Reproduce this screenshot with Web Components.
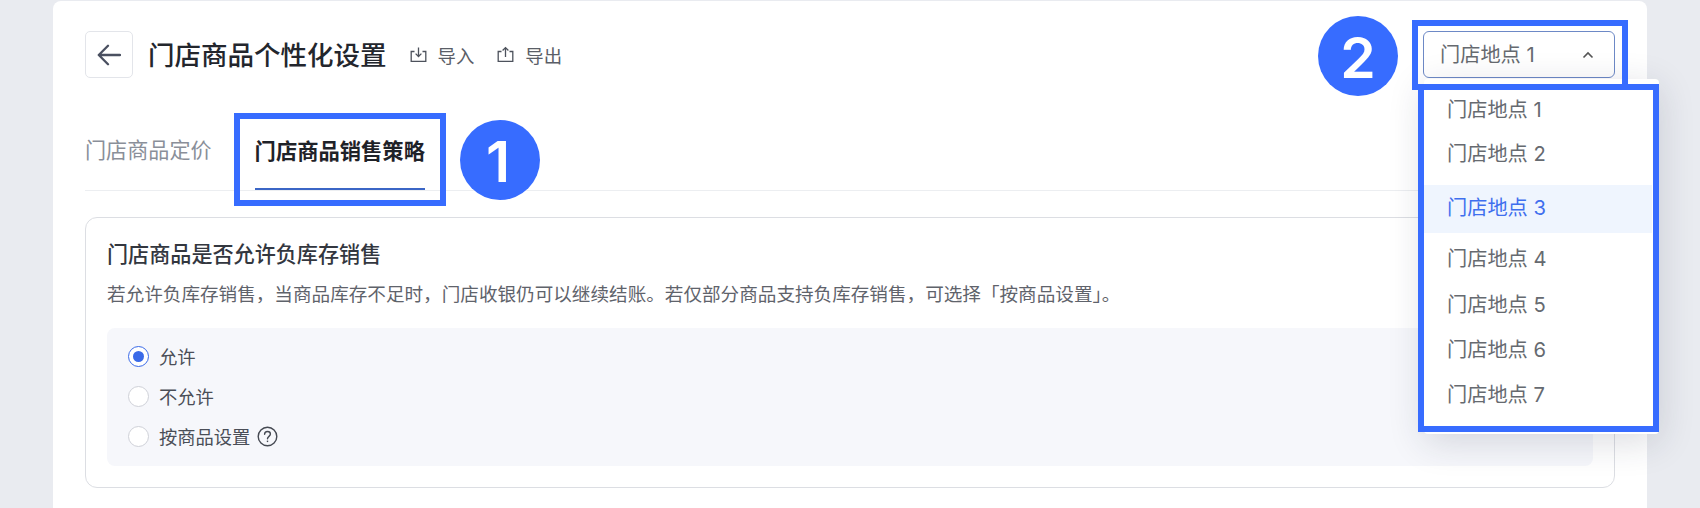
<!DOCTYPE html>
<html lang="zh">
<head>
<meta charset="utf-8">
<title>门店商品个性化设置</title>
<style>
html, body { margin: 0; height: 508px; overflow: hidden; background: #e9ebf0; }
body { font-family: Inter, "Noto Sans CJK SC", sans-serif; }
</style>
</head>
<body>

<store-page>
    <page-header slot="header" title-text="门店商品个性化设置"></page-header>
    <tab-bar slot="tabs"></tab-bar>
    <policy-section slot="section"
        heading="门店商品是否允许负库存销售"
        note="若允许负库存销售，当商品库存不足时，门店收银仍可以继续结账。若仅部分商品支持负库存销售，可选择「按商品设置」。">
        <radio-option checked>允许</radio-option>
        <radio-option>不允许</radio-option>
        <radio-option hint>按商品设置</radio-option>
    </policy-section>
    <!-- callouts drawn on top of the screenshot -->
    <call-out slot="overlay" style="left:234px;top:113px;width:212px;height:93px"></call-out>
    <call-out slot="overlay" style="left:1412px;top:20px;width:216px;height:70px"></call-out>
    <call-out slot="overlay" style="left:1418px;top:84px;width:241px;height:348px"></call-out>
    <num-badge slot="overlay" style="left:460px;top:120px;padding-right:4px">1</num-badge>
    <num-badge slot="overlay" style="left:1318px;top:16px">2</num-badge>
</store-page>

<script>
(function () {

    const ARROW_LEFT = '<svg width="24" height="24" viewBox="0 0 24 24" fill="none" stroke="#4a5060" stroke-width="2.3" stroke-linecap="round" stroke-linejoin="round"><path d="M23 12H1.8M11 2.8 1.8 12l9.2 9.2"/></svg>';
    const ICON_IMPORT = '<svg width="17" height="17" viewBox="0 0 17 17" fill="none" stroke="#4d525c" stroke-width="1.3"><path d="M4.5 5.5H1.2v9.8h14.6V5.5h-3.3"/><path d="M8.5 1.5v8.8M5.6 7.6l2.9 2.9 2.9-2.9"/></svg>';
    const ICON_EXPORT = '<svg width="17" height="17" viewBox="0 0 17 17" fill="none" stroke="#4d525c" stroke-width="1.3"><path d="M4.5 5.5H1.2v9.8h14.6V5.5h-3.3"/><path d="M8.5 11V1.8M5.6 4.5l2.9-2.9 2.9 2.9"/></svg>';

    function define(name, css, html, proto) {
        const template = document.createElement('template');
        template.innerHTML = '<style>' + css + '</style>' + html;
        class Comp extends HTMLElement {
            constructor() {
                super();
                this.attachShadow({ mode: 'open' });
                this.shadowRoot.appendChild(template.content.cloneNode(true));
            }
            connectedCallback() {
                if (proto) proto.call(this);
            }
        }
        customElements.define(name, Comp);
    }

    define('store-page', `
        :host { display: block; position: relative; height: 508px; padding: 0 53px; box-sizing: border-box; overflow: hidden; }
        .card { background: #fff; height: 507px; margin-top: 1px; border-radius: 8px 8px 0 0; padding: 30px 32px 0; box-sizing: border-box; }
    `, `
        <div class="card">
            <slot name="header"></slot>
            <slot name="tabs"></slot>
            <slot name="section"></slot>
        </div>
        <slot name="overlay"></slot>
    `);

    define('page-header', `
        :host { display: flex; align-items: center; height: 47px; }
        .back { width: 48px; height: 47px; box-sizing: border-box; border: 1px solid #e3e5ea; border-radius: 5px; display: flex; align-items: center; justify-content: center; }
        h1 { margin: 2px 23px 0 15px; font-size: 26.5px; font-weight: 500; color: #23262d; line-height: 47px; }
        .act { display: flex; align-items: center; gap: 11px; margin-right: 23px; font-size: 18.4px; color: #5a5e67; }
        svg { display: block; }
        store-select { margin-left: auto; }
    `, `
        <div class="back">${ARROW_LEFT}</div>
        <h1></h1>
        <div class="act">${ICON_IMPORT}<span>导入</span></div>
        <div class="act">${ICON_EXPORT}<span>导出</span></div>
        <store-select></store-select>
    `, function () {
        this.shadowRoot.querySelector('h1').textContent = this.getAttribute('title-text');
    });

    define('tab-bar', `
        :host { display: flex; gap: 43px; margin-top: 58px; height: 54px; border-bottom: 1px solid #eceef1; box-sizing: content-box; }
        .tab { font-size: 21.1px; line-height: 30px; height: 54px; box-sizing: border-box; color: #8a8f99; }
        .on { font-size: 21.3px; color: #1f2228; font-weight: 700; border-bottom: 2px solid #3b66c6; }
    `, `
        <div class="tab">门店商品定价</div>
        <div class="tab on">门店商品销售策略</div>
    `);

    define('store-select', `
        :host { display: block; position: relative; width: 192px; height: 47px; }
        .box { height: 47px; box-sizing: border-box; border: 1px solid #6d89c6; border-radius: 6px; display: flex; align-items: center; justify-content: space-between; padding: 0 20px 2px 16px; font-size: 20.2px; color: #666a70; }
        .box svg { margin-top: 2px; }
        .drop { position: absolute; left: 1px; top: 48px; width: 235px; height: 355px; box-sizing: border-box; background: #fff; border-radius: 4px; padding-top: 7px; box-shadow: 0 8px 36px rgba(30, 36, 60, .16); }
        .item { display: flex; align-items: center; padding-left: 23px; font-size: 20.2px; color: #666a70; height: 44px; width: 228px; box-sizing: border-box; }
        .cur { background: #eff5fe; color: #3f6fee; height: 48px; margin-top: 11px; padding-bottom: 6px; }
        svg { display: block; }
    `, `
        <div class="box"><span>门店地点 1</span><svg width="12" height="8" viewBox="0 0 12 8" fill="none" stroke="#555" stroke-width="1.6"><path d="M1.5 6.5 6 2l4.5 4.5"/></svg></div>
        <div class="drop">
            <div class="item">门店地点 1</div>
            <div class="item">门店地点 2</div>
            <div class="item cur">门店地点 3</div>
            <div class="item" style="height:48px">门店地点 4</div>
            <div class="item" style="height:45px">门店地点 5</div>
            <div class="item" style="height:44px">门店地点 6</div>
            <div class="item" style="height:47px">门店地点 7</div>
        </div>
    `);

    define('policy-section', `
        :host { display: block; margin-top: 26px; height: 271px; box-sizing: border-box; border: 1px solid #dcdee3; border-radius: 12px; padding: 21px 21px 0; }
        h2 { margin: 0; font-size: 21.1px; line-height: 32px; font-weight: 500; color: #33373f; }
        p { margin: 7px 0 0; font-size: 18.6px; line-height: 32px; color: #5f636b; white-space: nowrap; }
        .panel { margin-top: 18px; height: 138px; box-sizing: border-box; background: #f6f7fb; border-radius: 8px; padding: 8px 21px 0; display: flex; flex-direction: column; }
    `, `
        <h2></h2>
        <p></p>
        <div class="panel"><slot></slot></div>
    `, function () {
        this.shadowRoot.querySelector('h2').textContent = this.getAttribute('heading');
        this.shadowRoot.querySelector('p').textContent = this.getAttribute('note');
    });

    define('radio-option', `
        :host { display: flex; align-items: center; height: 40px; font-size: 18.3px; color: #4a4e57; }
        .dot { width: 21px; height: 21px; box-sizing: border-box; border: 1.5px solid #cfd1d8; border-radius: 50%; background: #fff; margin-right: 10px; display: flex; align-items: center; justify-content: center; }
        :host([checked]) .dot { border-color: #3a6ae8; }
        :host([checked]) .dot::after { content: ""; width: 11px; height: 11px; border-radius: 50%; background: #3a6ae8; }
        svg { display: none; margin-left: 7px; }
        :host([hint]) svg { display: block; }
    `, `
        <span class="dot"></span><slot></slot>
        <svg width="21" height="21" viewBox="0 0 21 21" fill="none" stroke="#454952" stroke-width="1.4"><circle cx="10.5" cy="10.5" r="9.3"/><path d="M7.6 8.3c0-1.7 1.3-2.8 2.9-2.8s2.9 1.1 2.9 2.6c0 2.3-2.9 2.2-2.9 4.6" stroke-linecap="round"/><path d="M10.5 14.6v1.5"/></svg>
    `);

    define('call-out', `
        :host { display: block; position: absolute; box-sizing: border-box; border: 6px solid #376cff; pointer-events: none; }
    `, '');

    define('num-badge', `
        :host { display: flex; position: absolute; width: 80px; height: 80px; box-sizing: border-box; padding-top: 2px; border-radius: 50%; background: #376cff; color: #fff; align-items: center; justify-content: center; font-size: 57px; font-weight: 600; line-height: 1; }
    `, '<slot></slot>');

})();
</script>
</body>
</html>
